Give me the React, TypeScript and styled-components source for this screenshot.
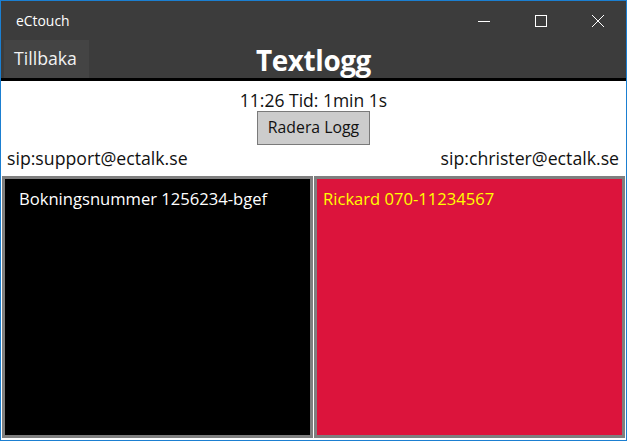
import React from 'react'
import styled, { createGlobalStyle } from 'styled-components'

const GlobalStyle = createGlobalStyle`
  html, body {
    margin: 0;
    padding: 0;
    width: 627px;
    height: 441px;
    overflow: hidden;
    background: #ffffff;
  }
  * {
    box-sizing: border-box;
  }
`

const Window = styled.div`
  width: 627px;
  height: 441px;
  border: 1px solid #1b7fd1;
  display: flex;
  flex-direction: column;
  font-family: 'Open Sans', 'Noto Sans', sans-serif;
  background: #ffffff;
`

const TitleBar = styled.div`
  height: 39px;
  display: flex;
  align-items: center;
  background: #3c3c3c;
  color: #ffffff;
`

const WindowTitle = styled.div`
  flex: 1;
  padding-left: 15px;
  font-size: 13.9px;
`

const ControlButton = styled.div`
  width: 57px;
  height: 39px;
  display: flex;
  align-items: center;
  justify-content: center;
`

const AppBar = styled.div`
  height: 41px;
  display: grid;
  grid-template-columns: 1fr auto 1fr;
  align-items: stretch;
  background: #3c3c3c;
  border-bottom: 3px solid #000000;
`

const BackButton = styled.div`
  justify-self: start;
  margin-left: 3px;
  padding: 0 12px 2px 10px;
  display: flex;
  align-items: center;
  background: #444444;
  color: #f2f2f2;
  font-size: 17.7px;
  margin-bottom: 1px;
`

const PageTitle = styled.h1`
  margin: 0;
  align-self: center;
  padding-top: 1px;
  color: #ffffff;
  font-size: 27.9px;
  font-weight: 700;
  letter-spacing: -0.4px;
`

const Content = styled.div`
  flex: 1;
  display: flex;
  flex-direction: column;
  padding: 8px 1px 2px 1px;
`

const Status = styled.div`
  text-align: center;
  font-size: 17.5px;
  line-height: 22px;
  color: #111111;
`

const ClearButton = styled.button`
  align-self: center;
  margin-top: 0;
  width: 113px;
  height: 34px;
  background: #cccccc;
  border: 1px solid #7a7a7a;
  font-family: inherit;
  font-size: 15.8px;
  color: #111111;
  padding: 0 0 2px 0;
`

const SipRow = styled.div`
  display: flex;
  justify-content: space-between;
  padding: 0 6px 0 5px;
  margin-top: 1px;
  font-size: 17.7px;
  line-height: 24px;
  color: #111111;
`

const Panels = styled.div`
  flex: 1;
  display: grid;
  grid-template-columns: 1fr 1fr;
  column-gap: 1px;
  margin-top: 6px;
`

const Panel = styled.div<{ $bg: string; $fg: string; $pad: number }>`
  background: ${(p) => p.$bg};
  color: ${(p) => p.$fg};
  border: 3px solid #7f7f7f;
  padding: 8px 8px 0 ${(p) => p.$pad}px;
  font-size: 16.6px;
`

const ControlIcon: React.FC<{ kind: 'min' | 'max' | 'close' }> = ({ kind }) => (
  <svg width="12" height="12" viewBox="0 0 12 12" fill="none" stroke="#ffffff" strokeWidth="1">
    {kind === 'min' && <line x1="0" y1="6.5" x2="12" y2="6.5" />}
    {kind === 'max' && <rect x="0.5" y="0.5" width="11" height="11" />}
    {kind === 'close' && (
      <>
        <line x1="0" y1="0" x2="12" y2="12" />
        <line x1="12" y1="0" x2="0" y2="12" />
      </>
    )}
  </svg>
)

const App: React.FC = () => {
  return (
    <>
      <GlobalStyle />
      <Window>
        <TitleBar>
          <WindowTitle>eCtouch</WindowTitle>
          <ControlButton>
            <ControlIcon kind="min" />
          </ControlButton>
          <ControlButton>
            <ControlIcon kind="max" />
          </ControlButton>
          <ControlButton>
            <ControlIcon kind="close" />
          </ControlButton>
        </TitleBar>
        <AppBar>
          <BackButton>Tillbaka</BackButton>
          <PageTitle>Textlogg</PageTitle>
          <div />
        </AppBar>
        <Content>
          <Status>11:26 Tid: 1min 1s</Status>
          <ClearButton>Radera Logg</ClearButton>
          <SipRow>
            <span>sip:support@ectalk.se</span>
            <span>sip:christer@ectalk.se</span>
          </SipRow>
          <Panels>
            <Panel $bg="#000000" $fg="#ffffff" $pad={14}>
              Bokningsnummer 1256234-bgef
            </Panel>
            <Panel $bg="#dc143c" $fg="#ffff00" $pad={6}>
              Rickard 070-11234567
            </Panel>
          </Panels>
        </Content>
      </Window>
    </>
  )
}

export default App
